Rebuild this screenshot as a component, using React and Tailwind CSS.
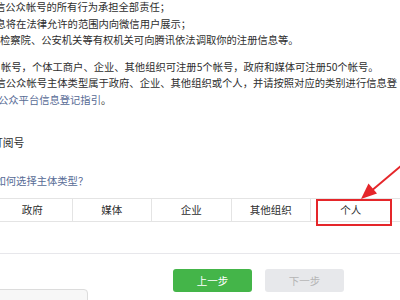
const PUNCT = "，、；。？：";

function T({ t }) {
  return (
    <>
      {t.split("").map((ch, i) =>
        PUNCT.includes(ch) ? (
          <span key={i} className="inline-block w-[1em]">{ch}</span>
        ) : (
          ch
        )
      )}
    </>
  );
}

export default function App() {
  const font = { fontFamily: '"Noto Sans CJK SC", sans-serif' };
  const cells = ["政府", "媒体", "企业", "其他组织", "个人"];
  return (
    <div lang="zh-CN" className="relative w-[400px] h-[300px] overflow-hidden bg-white text-[#2e2e2e] flex flex-col" style={font}>
      <div className="text-[10.3px] leading-[16.5px] whitespace-nowrap mt-[-1px] flex flex-col">
        <div className="ml-[-5px]"><T t="信公众帐号的所有行为承担全部责任；" /></div>
        <div className="ml-[-4.5px]"><T t="息将在法律允许的范围内向微信用户展示；" /></div>
        <div className="ml-[0px]"><T t="检察院、公安机关等有权机关可向腾讯依法调取你的注册信息等。" /></div>
      </div>
      <div className="text-[10.3px] leading-[16.5px] whitespace-nowrap mt-[10px] flex flex-col">
        <div className="ml-[1px]"><T t="帐号，个体工商户、企业、其他组织可注册5个帐号，政府和媒体可注册50个帐号。" /></div>
        <div className="ml-[-4.5px]"><T t="信公众帐号主体类型属于政府、企业、其他组织或个人，并请按照对应的类别进行信息登" /></div>
        <div className="ml-[-2px]"><span className="text-[#576b95]">公众平台信息登记指引</span><T t="。" /></div>
      </div>
      <div className="text-[10.8px] leading-[17px] whitespace-nowrap mt-[25.5px] ml-[-8px]">订阅号</div>
      <div className="text-[10.3px] leading-[17px] whitespace-nowrap mt-[21px] ml-[-4.5px] text-[#576b95]"><T t="如何选择主体类型？" /></div>
      <div className="mt-[9.5px] h-[24px] shrink-0 border-y border-[#e4e4e4] flex">
        <div className="flex ml-[-7px]">
          {cells.map((c, i) => (
            <div key={c} className={"w-[79.5px] h-full flex items-center justify-center text-[10.5px] " + (i < 4 ? "border-r border-[#e4e4e4]" : "")}>{c}</div>
          ))}
        </div>
      </div>
      <div className="mt-[31px] border-t border-[#e7e7eb]" />
      <div className="mt-[15px] flex gap-[13px] pl-[173px]">
        <div className="w-[79px] h-[23px] rounded-[3px] bg-[#44b549] text-white text-[10.5px] flex items-center justify-center">上一步</div>
        <div className="w-[79px] h-[23px] rounded-[3px] bg-[#e7e8eb] text-[#b5b5b5] text-[10.5px] flex items-center justify-center">下一步</div>
      </div>
      <div className="absolute left-[-2px] top-[289px] w-[90px] h-[20px] border border-[#dcdcdc] bg-[#f7f7f7] rounded-tr-[4px]" />
      <div className="absolute left-[316px] top-[199px] w-[76px] h-[27px] border-2 border-[#e5262a]" />
      <svg className="absolute left-0 top-0" width="400" height="300" viewBox="0 0 400 300">
        <line x1="402" y1="165" x2="370" y2="192" stroke="#e5262a" strokeWidth="2" />
        <polygon points="361,199 377,193.5 368.5,183.5" fill="#e5262a" />
      </svg>
    </div>
  );
}
